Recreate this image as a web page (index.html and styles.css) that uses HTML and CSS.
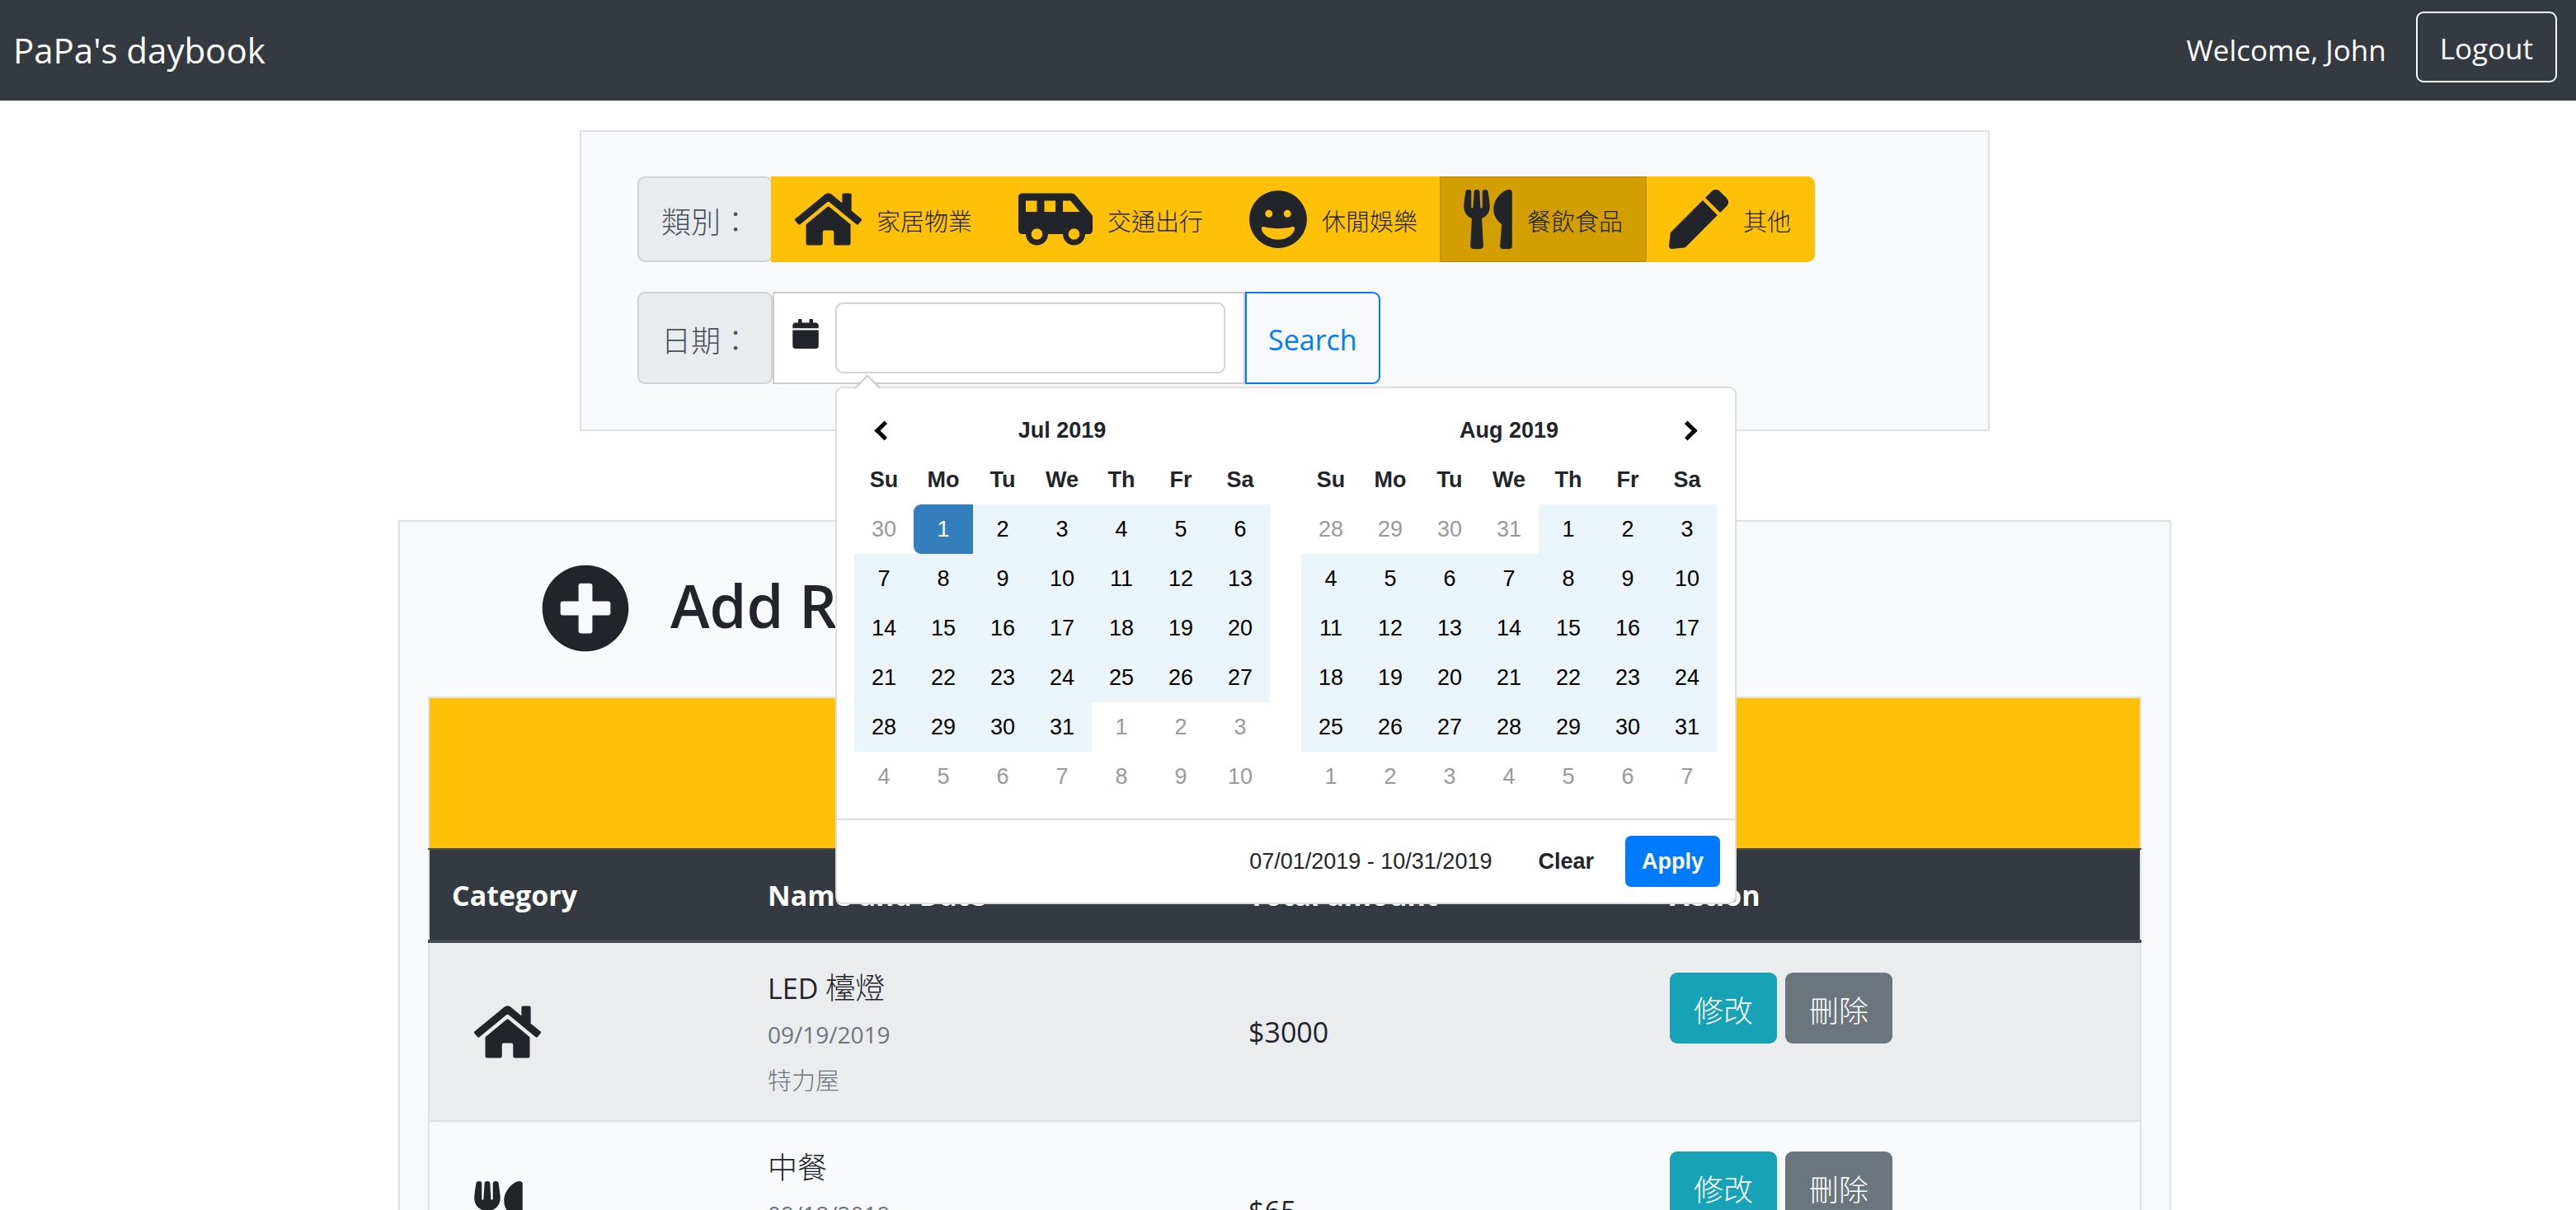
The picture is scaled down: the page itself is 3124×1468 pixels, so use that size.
FILE: index.html
```html
<!DOCTYPE html>
<html lang="zh-Hant">
<head>
<meta charset="utf-8">
<meta name="viewport" content="width=device-width, initial-scale=1">
<title>PaPa's daybook</title>
<link rel="stylesheet" href="styles.css">
</head>
<body>
<svg class="sprite" aria-hidden="true">
  <symbol id="home" viewBox="0 0 576 512"><path d="M280.37 148.26L96 300.11V464a16 16 0 0 0 16 16l112.06-.29a16 16 0 0 0 15.92-16V368a16 16 0 0 1 16-16h64a16 16 0 0 1 16 16v95.64a16 16 0 0 0 16 16.05L464 480a16 16 0 0 0 16-16V300L295.67 148.26a12.19 12.19 0 0 0-15.3 0zM571.6 251.47L488 182.56V44.05a12 12 0 0 0-12-12h-56a12 12 0 0 0-12 12v72.61L318.47 43a48 48 0 0 0-61 0L4.34 251.47a12 12 0 0 0-1.6 16.9l25.5 31A12 12 0 0 0 45.15 301l235.22-193.74a12.19 12.19 0 0 1 15.3 0L530.9 301a12 12 0 0 0 16.9-1.6l25.5-31a12 12 0 0 0-1.7-16.93z"/></symbol>
  <symbol id="van" viewBox="0 0 640 512"><path d="M628.88 210.65L494.39 49.27A48.01 48.01 0 0 0 457.52 32H32C14.33 32 0 46.33 0 64v288c0 17.67 14.33 32 32 32h32c0 53.02 42.98 96 96 96s96-42.98 96-96h128c0 53.02 42.98 96 96 96s96-42.98 96-96h32c17.67 0 32-14.33 32-32V241.38c0-11.23-3.94-22.1-11.12-30.73zM64 192V96h96v96H64zm96 240c-26.5 0-48-21.5-48-48s21.5-48 48-48 48 21.5 48 48-21.5 48-48 48zm160-240h-96V96h96v96zm160 240c-26.5 0-48-21.5-48-48s21.5-48 48-48 48 21.5 48 48-21.5 48-48 48zm-96-240V96h66.02l80 96H384z"/></symbol>
  <symbol id="grin" viewBox="0 0 496 512"><path d="M248 8C111 8 0 119 0 256s111 248 248 248 248-111 248-248S385 8 248 8zm80 168c17.7 0 32 14.3 32 32s-14.3 32-32 32-32-14.3-32-32 14.3-32 32-32zm-160 0c17.7 0 32 14.3 32 32s-14.3 32-32 32-32-14.3-32-32 14.3-32 32-32zm80 256c-60.6 0-134.5-38.3-143.8-93.3-2-11.8 9.3-21.6 20.7-17.9C155.1 330.5 200 336 248 336s92.9-5.5 123.1-15.2c11.3-3.7 22.6 6.1 20.7 17.9-9.3 55-83.2 93.3-143.8 93.3z"/></symbol>
  <symbol id="utensils" viewBox="0 0 416 512"><path d="M207.9 15.2c.8 4.7 16.1 94.5 16.1 128.8 0 52.3-27.8 89.6-68.9 104.6L168 486.7c.7 13.7-10.2 25.3-24 25.3H80c-13.7 0-24.7-11.5-24-25.3l12.9-238.1C27.7 233.6 0 196.2 0 144 0 109.6 15.3 19.9 16.1 15.2 19.3-5.1 61.4-5.4 64 16.3v141.2c1.3 3.4 15.1 3.2 16 0 1.4-25.3 7.9-139.2 8-141.8 3.3-20.8 44.7-20.8 47.9 0 .2 2.7 6.6 116.5 8 141.8.9 3.2 14.8 3.4 16 0V16.3c2.6-21.6 44.8-21.4 47.9-1.1zm119.2 285.7l-15 185.1c-1.2 14 9.9 26 23.9 26h56c13.3 0 24-10.7 24-24V24c0-13.2-10.7-24-24-24-82.5 0-221.4 178.5-64.9 300.9z"/></symbol>
  <symbol id="pen" viewBox="0 0 512 512"><path d="M290.74 93.24l128.02 128.02-277.99 277.99-114.14 12.6C11.35 513.54-1.56 500.62.14 485.34l12.7-114.22 277.9-277.88zm207.2-19.06l-60.11-60.11c-18.75-18.75-49.16-18.75-67.91 0l-56.55 56.55 128.02 128.02 56.55-56.55c18.75-18.76 18.75-49.16 0-67.91z"/></symbol>
  <symbol id="calendar" viewBox="0 0 448 512"><path d="M12 192h424c6.6 0 12 5.4 12 12v260c0 26.5-21.5 48-48 48H48c-26.5 0-48-21.5-48-48V204c0-6.6 5.4-12 12-12zm436-44v-36c0-26.5-21.5-48-48-48h-48V12c0-6.6-5.4-12-12-12h-40c-6.6 0-12 5.4-12 12v52H160V12c0-6.6-5.4-12-12-12h-40c-6.6 0-12 5.4-12 12v52H48C21.5 64 0 85.5 0 112v36c0 6.6 5.4 12 12 12h424c6.6 0 12-5.4 12-12z"/></symbol>
  <symbol id="plus" viewBox="0 0 512 512"><path d="M256 8C119 8 8 119 8 256s111 248 248 248 248-111 248-248S393 8 256 8zm144 276c0 6.6-5.4 12-12 12h-92v92c0 6.6-5.4 12-12 12h-56c-6.6 0-12-5.4-12-12v-92h-92c-6.6 0-12-5.4-12-12v-56c0-6.6 5.4-12 12-12h92v-92c0-6.6 5.4-12 12-12h56c6.6 0 12 5.4 12 12v92h92c6.6 0 12 5.4 12 12v56z"/></symbol>
</svg>

<header class="navbar">
  <a class="brand" href="#">PaPa's daybook</a>
  <div class="account">
    <span class="welcome">Welcome, John</span>
    <button class="btn btn-logout" type="button">Logout</button>
  </div>
</header>

<main class="page">
  <form class="card filters">
    <div class="group" role="group" aria-labelledby="category-label">
      <span class="addon" id="category-label">類別：</span>
      <button class="category" type="button"><svg class="icon icon-home"><use href="#home"/></svg><span>家居物業</span></button>
      <button class="category" type="button"><svg class="icon icon-van"><use href="#van"/></svg><span>交通出行</span></button>
      <button class="category" type="button"><svg class="icon icon-grin"><use href="#grin"/></svg><span>休閒娛樂</span></button>
      <button class="category active" type="button" aria-pressed="true"><svg class="icon icon-utensils"><use href="#utensils"/></svg><span>餐飲食品</span></button>
      <button class="category" type="button"><svg class="icon icon-pen"><use href="#pen"/></svg><span>其他</span></button>
    </div>

    <div class="group">
      <label class="addon" for="date-range">日期：</label>
      <div class="range-box">
        <svg class="icon-calendar"><use href="#calendar"/></svg>
        <div class="range-field">
          <input class="range-input" id="date-range" type="text">
          <div class="picker">
            <div class="months">
              <table class="month">
                <thead>
                  <tr><th><button class="arrow prev" type="button" aria-label="Previous month"></button></th><th colspan="5">Jul 2019</th><th></th></tr>
                  <tr><th>Su</th><th>Mo</th><th>Tu</th><th>We</th><th>Th</th><th>Fr</th><th>Sa</th></tr>
                </thead>
                <tbody>
                  <tr><td class="off">30</td><td class="start">1</td><td>2</td><td>3</td><td>4</td><td>5</td><td>6</td></tr>
                  <tr><td>7</td><td>8</td><td>9</td><td>10</td><td>11</td><td>12</td><td>13</td></tr>
                  <tr><td>14</td><td>15</td><td>16</td><td>17</td><td>18</td><td>19</td><td>20</td></tr>
                  <tr><td>21</td><td>22</td><td>23</td><td>24</td><td>25</td><td>26</td><td>27</td></tr>
                  <tr><td>28</td><td>29</td><td>30</td><td>31</td><td class="off">1</td><td class="off">2</td><td class="off">3</td></tr>
                  <tr><td class="off">4</td><td class="off">5</td><td class="off">6</td><td class="off">7</td><td class="off">8</td><td class="off">9</td><td class="off">10</td></tr>
                </tbody>
              </table>
              <table class="month">
                <thead>
                  <tr><th></th><th colspan="5">Aug 2019</th><th><button class="arrow next" type="button" aria-label="Next month"></button></th></tr>
                  <tr><th>Su</th><th>Mo</th><th>Tu</th><th>We</th><th>Th</th><th>Fr</th><th>Sa</th></tr>
                </thead>
                <tbody>
                  <tr><td class="off">28</td><td class="off">29</td><td class="off">30</td><td class="off">31</td><td>1</td><td>2</td><td>3</td></tr>
                  <tr><td>4</td><td>5</td><td>6</td><td>7</td><td>8</td><td>9</td><td>10</td></tr>
                  <tr><td>11</td><td>12</td><td>13</td><td>14</td><td>15</td><td>16</td><td>17</td></tr>
                  <tr><td>18</td><td>19</td><td>20</td><td>21</td><td>22</td><td>23</td><td>24</td></tr>
                  <tr><td>25</td><td>26</td><td>27</td><td>28</td><td>29</td><td>30</td><td>31</td></tr>
                  <tr><td class="off">1</td><td class="off">2</td><td class="off">3</td><td class="off">4</td><td class="off">5</td><td class="off">6</td><td class="off">7</td></tr>
                </tbody>
              </table>
            </div>
            <div class="picker-footer">
              <span>07/01/2019 - 10/31/2019</span>
              <button class="picker-btn" type="button">Clear</button>
              <button class="picker-btn apply" type="button">Apply</button>
            </div>
          </div>
        </div>
      </div>
      <button class="btn btn-search" type="submit">Search</button>
    </div>
  </form>

  <section class="card records">
    <div class="records-head">
      <svg class="icon-plus"><use href="#plus"/></svg>
      <h2 class="title">Add Record</h2>
    </div>
    <table class="record-table">
      <colgroup><col class="col-category"><col class="col-name"><col class="col-amount"><col></colgroup>
      <thead>
        <tr class="summary"><td colspan="4"></td></tr>
        <tr class="headings"><th>Category</th><th>Name and Date</th><th>Total amount</th><th>Action</th></tr>
      </thead>
      <tbody>
        <tr>
          <td class="kind"><svg class="icon icon-home"><use href="#home"/></svg></td>
          <td class="entry"><p class="name">LED <span class="zh">檯燈</span></p><p class="date">09/19/2019</p><p class="shop">特力屋</p></td>
          <td class="amount">$3000</td>
          <td class="actions"><div class="action-row"><button class="btn edit" type="button">修改</button><button class="btn delete" type="button">刪除</button></div></td>
        </tr>
        <tr>
          <td class="kind"><svg class="icon icon-utensils"><use href="#utensils"/></svg></td>
          <td class="entry"><p class="name"><span class="zh">中餐</span></p><p class="date">09/18/2019</p><p class="shop">餐廳</p></td>
          <td class="amount">$65</td>
          <td class="actions"><div class="action-row"><button class="btn edit" type="button">修改</button><button class="btn delete" type="button">刪除</button></div></td>
        </tr>
      </tbody>
    </table>
  </section>
</main>
</body>
</html>
```
FILE: styles.css
```css
* { box-sizing: border-box; }

body {
  margin: 0;
  height: 100vh;
  overflow: hidden;
  background: #fff;
  color: #212529;
  font: 34px/54px "Open Sans", "Noto Sans CJK TC", sans-serif;
}

button, input { font: inherit; color: inherit; margin: 0; }
button { cursor: pointer; }
p, h2 { margin: 0; }
.sprite { display: none; }

.navbar {
  display: flex;
  align-items: center;
  justify-content: space-between;
  height: 122px;
  padding: 0 23px 0 16px;
  background: #343a40;
  color: #fff;
}
.brand {
  color: #fff;
  font-size: 42px;
  text-decoration: none;
}
.account {
  display: flex;
  align-items: center;
  gap: 36px;
  padding-bottom: 8px;
  font-size: 35px;
}
.welcome { padding-top: 8px; }

.btn {
  height: 86px;
  padding: 4px 27px 0;
  border: 2px solid transparent;
  border-radius: 9px;
  background: transparent;
}
.btn-logout { border-color: #f8f9fa; color: #f8f9fa; }

.page {
  display: flex;
  flex-direction: column;
  align-items: center;
  gap: 108px;
  padding: 36px 8px 0 0;
}
.card {
  width: 100%;
  border: 2px solid #dee2e6;
  background: #f8f9fa;
}

.filters {
  display: flex;
  flex-direction: column;
  gap: 36px;
  max-width: 1710px;
  padding: 54px 68px 55px;
}
.group { display: flex; }
.addon {
  display: flex;
  align-items: center;
  width: 164px;
  padding: 8px 0 0 27px;
  border: 2px solid #ced4da;
  border-radius: 9px;
  background: #e9ecef;
  color: #495057;
  font-size: 36px;
  font-weight: 300;
}
.category {
  display: flex;
  align-items: center;
  gap: 18px;
  height: 104px;
  margin-left: -2px;
  padding: 0 27px;
  border: 2px solid #ffc107;
  background: #ffc107;
  font-size: 29px;
  font-weight: 300;
}
.category span { padding-top: 6px; }
.category:last-child { border-radius: 0 9px 9px 0; }
.category.active { z-index: 1; border-color: #c69500; background: #d39e00; }
.icon { height: 72px; fill: currentColor; }
.icon-home { width: 81px; }
.icon-van { width: 90px; }
.icon-grin { width: 70px; }
.icon-utensils { width: 59px; }
.icon-pen { width: 72px; }

.range-box {
  display: flex;
  gap: 20px;
  width: 573px;
  height: 112px;
  padding: 11px 22px;
  border: 2px solid #ccc;
  background: #fff;
}
.icon-calendar { width: 32px; height: 36px; margin-top: 20px; fill: currentColor; }
.range-field { position: relative; flex: 1; }
.range-input {
  width: 100%;
  height: 86px;
  padding: 13px 27px;
  border: 2px solid #ced4da;
  border-radius: 9px;
  background: #fff;
}
.btn-search {
  height: 112px;
  padding: 4px 26px 0;
  border-color: #007bff;
  border-radius: 0 9px 9px 0;
  color: #007bff;
}

.picker {
  position: absolute;
  z-index: 2;
  top: calc(100% + 16px);
  left: 0;
  border: 2px solid #ddd;
  border-radius: 9px;
  background: #fff;
  font: 27px/60px "Liberation Sans", sans-serif;
}
.picker::before {
  content: "";
  position: absolute;
  top: -12px;
  left: 26px;
  width: 20px;
  height: 20px;
  border: solid #ccc;
  border-width: 2px 0 0 2px;
  background: linear-gradient(135deg, #fff 50%, transparent 50%);
  transform: rotate(45deg);
}
.months {
  display: flex;
  gap: 38px;
  padding: 21px 22px 21px 21px;
}
.month {
  border-collapse: collapse;
  text-align: center;
}
.month th, .month td { width: 72px; min-width: 72px; height: 60px; padding: 0; }
.month td { background: #ebf4f8; color: #000; }
.month .off { background: #fff; color: #999; }
.month .start { border-radius: 9px 0 0 9px; background: #357ebd; color: #fff; }
.arrow {
  display: block;
  width: 17px;
  height: 17px;
  margin: 0 auto;
  padding: 0;
  border: solid #000;
  border-width: 0 5px 5px 0;
  background: none;
}
.prev { transform: rotate(135deg); }
.next { transform: rotate(-45deg); }
.picker-footer {
  display: flex;
  align-items: center;
  justify-content: flex-end;
  gap: 18px;
  padding: 19px 18px;
  border-top: 2px solid #ddd;
}
.picker-footer span { margin-right: 18px; }
.picker-btn {
  height: 62px;
  padding: 0 20px;
  border: 0;
  border-radius: 7px;
  background: transparent;
  font-weight: 700;
}
.apply { background: #007bff; color: #fff; }

.records {
  max-width: 2150px;
  padding: 51px 34px 34px;
}
.records-head {
  display: flex;
  align-items: flex-start;
  gap: 49px;
  height: 161px;
  padding-left: 137px;
}
.icon-plus { width: 108px; height: 108px; fill: currentColor; }
.title { padding-top: 7px; font-size: 72px; line-height: 86px; font-weight: 600; }

.record-table {
  width: 100%;
  border: 2px solid #dee2e6;
  border-collapse: collapse;
  table-layout: fixed;
  text-align: left;
}
.col-category { width: 384px; }
.col-name { width: 583px; }
.col-amount { width: 511px; }
.record-table td, .record-table th { padding: 27px; }
.summary { height: 184px; background: #ffc107; }
.record-table .headings {
  height: 112px;
  border-top: 2px solid #454d55;
  border-bottom: 4px solid #454d55;
  background: #343a40;
  color: #fff;
}
.record-table tbody tr { height: 218px; border-bottom: 2px solid #dee2e6; }
.record-table tbody tr:nth-child(odd) { background: #ebecee; }
.record-table .kind { padding-left: 54px; }
.kind .icon { display: block; }
.record-table .entry { padding-bottom: 20px; line-height: 56px; }
.zh { font-size: 36px; font-weight: 300; line-height: 1; }
.date, .shop { color: #6c757d; }
.date { font-size: 28px; }
.shop { font-size: 29px; font-weight: 300; }
.record-table .actions { padding-top: 36px; vertical-align: top; }
.action-row { display: flex; gap: 10px; }
.edit, .delete { padding-top: 8px; font-size: 36px; font-weight: 300; color: #fff; }
.edit { background: #17a2b8; }
.delete { background: #6c757d; }
```
